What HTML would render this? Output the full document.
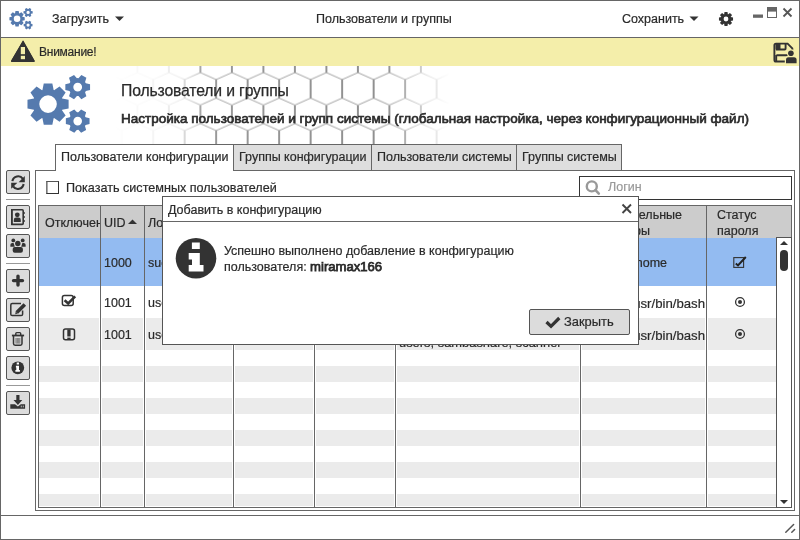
<!DOCTYPE html>
<html><head><meta charset="utf-8">
<style>
*{margin:0;padding:0;box-sizing:border-box}
html,body{width:800px;height:540px;overflow:hidden;background:#fff}
body{position:relative;font-family:"Liberation Sans",sans-serif;font-size:12.5px;color:#2a2a2a}
.a{position:absolute}
.t{position:absolute;white-space:nowrap;line-height:15px;-webkit-text-stroke-width:0.2px;will-change:transform}
.hl{position:absolute;background:#666}
.btn{position:absolute;left:6px;width:24px;height:24px;border:1px solid #555;border-radius:2px;background:#dcdcdc}
.btn svg{position:absolute;left:0;top:0}
.sep{position:absolute;left:6px;width:24px;height:1px;background:#999}
.row{position:absolute;left:39px;width:737px}
.vl{position:absolute;width:1px;background:#666}
</style></head><body>

<!-- window border -->
<div class="a" style="left:0;top:0;width:800px;height:540px;border:1px solid #666"></div>

<!-- title bar -->
<div class="hl" style="left:0;top:37px;width:800px;height:1px"></div>
<svg class="a" style="left:8px;top:6px" width="26" height="26" viewBox="0 0 26 26"></svg>
<div class="t" style="left:52px;top:12px">Загрузить</div>
<div class="t" style="left:316px;top:12px">Пользователи и группы</div>
<div class="t" style="left:622px;top:12px">Сохранить</div>

<!-- warning bar -->
<div class="a" style="left:1px;top:38px;width:798px;height:28px;background:#f4eeaa"></div>
<div class="t" style="left:39px;top:45px;font-size:12px;letter-spacing:-0.25px">Внимание!</div>


<!-- hex pattern -->
<svg class="a" style="left:0;top:0" width="800" height="170" viewBox="0 0 800 170">
<defs>
<pattern id="hx" patternUnits="userSpaceOnUse" x="11.40" y="21.60" width="31.5" height="51">
<path d="M0 0 L15.75 7 L31.5 0 M0 32.5 L15.75 25.5 L31.5 32.5" fill="none" stroke="#222" stroke-width="0.8"/><path d="M15.75 7 V25.5 M0 32.5 V51 M31.5 32.5 V51" fill="none" stroke="#333" stroke-width="1" shape-rendering="crispEdges"/>
</pattern>
<linearGradient id="hg" gradientUnits="userSpaceOnUse" x1="110" x2="460" y1="0" y2="0"><stop offset="0.000" stop-color="#fff" stop-opacity="0"/><stop offset="0.114" stop-color="#fff" stop-opacity="0.04"/><stop offset="0.200" stop-color="#fff" stop-opacity="0.12"/><stop offset="0.271" stop-color="#fff" stop-opacity="0.5"/><stop offset="0.786" stop-color="#fff" stop-opacity="0.55"/><stop offset="0.857" stop-color="#fff" stop-opacity="0.35"/><stop offset="0.920" stop-color="#fff" stop-opacity="0.15"/><stop offset="0.971" stop-color="#fff" stop-opacity="0"/></linearGradient>
<mask id="hm" maskUnits="userSpaceOnUse" x="110" y="66" width="350" height="78"><rect x="110" y="66" width="350" height="78" fill="url(#hg)"/></mask>
</defs>
<rect x="110" y="66" width="350" height="78" fill="url(#hx)" mask="url(#hm)"/>
</svg>

<!-- heading -->
<div class="t" style="left:121px;top:82px;font-size:15.75px;line-height:18px;letter-spacing:-0.15px;-webkit-text-stroke-width:0.25px">Пользователи и группы</div>
<div class="t" style="left:121px;top:111px;font-size:13.5px;-webkit-text-stroke-width:0.65px">Настройка пользователей и групп системы (глобальная настройка, через конфигурационный файл)</div>

<!-- left toolbar -->
<div class="btn" style="top:170px"></div>
<div class="sep" style="top:199px"></div>
<div class="btn" style="top:205px"></div>
<div class="btn" style="top:234px"></div>
<div class="sep" style="top:263px"></div>
<div class="btn" style="top:269px"></div>
<div class="btn" style="top:298px"></div>
<div class="btn" style="top:327px"></div>
<div class="btn" style="top:356px"></div>
<div class="sep" style="top:385px"></div>
<div class="btn" style="top:391px"></div>

<!-- tabs -->
<div class="a" style="left:35px;top:170px;width:760px;height:341px;border:1px solid #666"></div>
<div class="a" style="left:55px;top:144px;width:179px;height:27px;border:1px solid #666;border-bottom:none;background:#fff"></div>
<div class="a" style="left:233px;top:144px;width:139px;height:27px;border:1px solid #666;background:#dedede"></div>
<div class="a" style="left:371px;top:144px;width:146px;height:27px;border:1px solid #666;background:#dedede"></div>
<div class="a" style="left:516px;top:144px;width:106px;height:27px;border:1px solid #666;background:#dedede"></div>
<div class="t" style="left:61px;top:150px">Пользователи конфигурации</div>
<div class="t" style="left:239px;top:150px">Группы конфигурации</div>
<div class="t" style="left:377px;top:150px">Пользователи системы</div>
<div class="t" style="left:522px;top:150px">Группы системы</div>

<!-- checkbox -->
<div class="a" style="left:46px;top:181px;width:13px;height:13px;border:1px solid;border-color:#555 #333 #333 #777;box-shadow:inset 1px 0 #aaa;background:#fff"></div>
<div class="t" style="left:66px;top:181px;font-size:12.6px">Показать системных пользователей</div>

<!-- search -->
<div class="a" style="left:579px;top:176px;width:213px;height:24px;border:1px solid #333;background:#fff"></div>
<div class="t" style="left:608px;top:180px;color:#999">Логин</div>

<svg class="a" style="left:580px;top:177px" width="24" height="20" viewBox="580 177 24 20"><circle cx="591.8" cy="186.4" r="5" fill="none" stroke="#999" stroke-width="2.4"/><path d="M595.5 190.2 L598.8 193.6" stroke="#999" stroke-width="2.6" stroke-linecap="round"/></svg>
<!-- table -->
<div class="a" style="left:38px;top:205px;width:754px;height:303px;border:1px solid #666;background:#fff"></div>
<div class="a" style="left:39px;top:206px;width:752px;height:32px;background:#cccccc"></div>

<div class="a" style="left:39px;top:238px;width:737px;height:48px;background:#93bbf1"></div>
<div class="a" style="left:39px;top:318px;width:737px;height:32px;background:#ebebeb"></div>
<div class="a" style="left:39px;top:366px;width:737px;height:16px;background:#ebebeb"></div>
<div class="a" style="left:39px;top:398px;width:737px;height:16px;background:#ebebeb"></div>
<div class="a" style="left:39px;top:430px;width:737px;height:16px;background:#ebebeb"></div>
<div class="a" style="left:39px;top:462px;width:737px;height:16px;background:#ebebeb"></div>
<div class="a" style="left:39px;top:494px;width:737px;height:12px;background:#ebebeb"></div>
<div class="a" style="left:99px;top:286px;width:3px;height:221px;background:#fff"></div>
<div class="vl" style="left:100px;top:206px;height:301px"></div>
<div class="a" style="left:143px;top:286px;width:3px;height:221px;background:#fff"></div>
<div class="vl" style="left:144px;top:206px;height:301px"></div>
<div class="a" style="left:232px;top:286px;width:3px;height:221px;background:#fff"></div>
<div class="vl" style="left:233px;top:206px;height:301px"></div>
<div class="a" style="left:313px;top:286px;width:3px;height:221px;background:#fff"></div>
<div class="vl" style="left:314px;top:206px;height:301px"></div>
<div class="a" style="left:394px;top:286px;width:3px;height:221px;background:#fff"></div>
<div class="vl" style="left:395px;top:206px;height:301px"></div>
<div class="a" style="left:579px;top:286px;width:3px;height:221px;background:#fff"></div>
<div class="vl" style="left:580px;top:206px;height:301px"></div>
<div class="a" style="left:705px;top:286px;width:3px;height:221px;background:#fff"></div>
<div class="vl" style="left:706px;top:206px;height:301px"></div>
<!-- scrollbar -->
<div class="a" style="left:776px;top:237px;width:16px;height:271px;border:1px solid #555;background:#fff"></div>
<svg class="a" style="left:776px;top:237px" width="16" height="271" viewBox="0 0 16 271">
<path d="M4 8 L8 4 L12 8 Z" fill="#333"/>
<rect x="4" y="13" width="8" height="21" rx="4" fill="#333"/>
<path d="M4 263 L12 263 L8 267 Z" fill="#333"/>
</svg>

<!-- header text -->
<div class="t" style="left:45px;top:216px;width:55px;overflow:hidden">Отключен</div>
<div class="t" style="left:104px;top:216px">UID</div>
<svg class="a" style="left:128px;top:219px" width="10" height="6"><path d="M0 5 L4.5 0.5 L9 5 Z" fill="#333"/></svg>
<div class="t" style="left:148px;top:216px">Логин</div>
<div class="t" style="left:717px;top:208px">Статус</div>
<div class="t" style="left:717px;top:224px">пароля</div>
<div class="t" style="left:540px;top:208px;width:142px;overflow:hidden;text-align:right">Дополнительные</div>
<div class="t" style="left:560px;top:224px;width:90px;overflow:hidden;text-align:right">параметры</div>

<!-- cells -->
<div class="t" style="left:104px;top:256px">1000</div>
<div class="t" style="left:148px;top:256px">sudo</div>
<div class="t" style="left:104px;top:296px">1001</div>
<div class="t" style="left:148px;top:296px">user</div>
<div class="t" style="left:104px;top:328px">1001</div>
<div class="t" style="left:148px;top:328px">user</div>
<div class="t" style="left:600px;top:256px;width:67px;overflow:hidden;text-align:right">/home</div>
<div class="t" style="left:584px;top:296px;width:121px;overflow:hidden;text-align:right;font-size:13.2px">/usr/bin/bash</div>
<div class="t" style="left:584px;top:328px;width:121px;overflow:hidden;text-align:right;font-size:13.2px">/usr/bin/bash</div>
<div class="t" style="left:399px;top:335px;font-size:12.9px">users, sambashare, scanner</div>


<!-- toolbar icons -->
<svg class="a" style="left:0;top:160px" width="36" height="260" viewBox="0 160 36 260">
<g fill="none" stroke="#333" stroke-width="2.1">
<path d="M12.4 181.2 A5.8 5.8 0 0 1 22.9 178.8"/>
<path d="M23.6 184 A5.8 5.8 0 0 1 13.1 186.4"/>
</g>
<path d="M24.8 176 L24.8 182.2 L18.6 182.2 Z" fill="#333"/>
<path d="M11.2 188.8 L11.2 182.8 L17.4 182.8 Z" fill="#333"/>
<rect x="11.8" y="209.8" width="11.4" height="14.6" rx="1" fill="none" stroke="#333" stroke-width="1.6"/>
<rect x="11" y="209" width="1.6" height="16.2" fill="#333"/>
<path d="M23.2 212 h1.5 v2 h-1.5z M23.2 216 h1.5 v2 h-1.5z M23.2 220 h1.5 v2 h-1.5z" fill="#333"/>
<circle cx="17.3" cy="214.8" r="2.4" fill="#333"/>
<path d="M13.8 222 L13.8 220 Q13.8 217.6 16.2 217.6 L18.4 217.6 Q20.8 217.6 20.8 220 L20.8 222 Z" fill="#333"/>
<circle cx="17.8" cy="243.5" r="2.7" fill="#333"/>
<rect x="12.7" y="247" width="10.2" height="5.8" rx="2" fill="#333"/>
<circle cx="13.3" cy="240.4" r="1.9" fill="#333"/><circle cx="22.7" cy="240.4" r="1.9" fill="#333"/>
<path d="M10.4 246.7 L10.4 244.8 Q10.4 242.9 12.3 242.9 L13.6 242.9 L14.8 246.7 Z" fill="#333"/>
<path d="M25.6 246.7 L25.6 244.8 Q25.6 242.9 23.7 242.9 L22.4 242.9 L21.2 246.7 Z" fill="#333"/>
<path d="M13.5 280.6 L22.5 280.6 M18 276.1 L18 285.1" stroke="#333" stroke-width="3.4" stroke-linecap="round"/>
<path d="M21 303.6 L12.2 303.6 Q10.8 303.6 10.8 305 L10.8 314.2 Q10.8 315.6 12.2 315.6 L21.2 315.6 Q22.6 315.6 22.6 314.2 L22.6 310.5" fill="none" stroke="#333" stroke-width="1.5"/>
<path d="M24.8 304.5 L16.8 312.5" stroke="#333" stroke-width="3.6" stroke-linecap="butt"/>
<path d="M15.8 311.5 L17.8 313.5 L15.2 314.2 Z" fill="#333"/>
<path d="M11.9 335.5 L24.1 335.5" stroke="#333" stroke-width="1.8"/>
<path d="M15.8 335 L15.8 333.5 Q15.8 332.6 16.7 332.6 L19.8 332.6 Q20.7 332.6 20.7 333.5 L20.7 335" fill="none" stroke="#333" stroke-width="1.4"/>
<path d="M13.5 336 L13.5 343.6 Q13.5 345.2 15.1 345.2 L20.4 345.2 Q22 345.2 22 343.6 L22 336" fill="none" stroke="#333" stroke-width="1.5"/>
<rect x="15.5" y="338" width="4.8" height="5.5" fill="#777"/>
<path d="M16.5 338 L16.5 343.5 M18 338 L18 343.5 M19.3 338 L19.3 343.5" stroke="#bbb" stroke-width="0.5"/>
<circle cx="17.8" cy="367.8" r="6.4" fill="#333"/>
<path d="M16.7 362.6 h2.3 v1.9 h-2.3 z M15.9 365.8 h3.1 v4.3 h0.9 v1.6 h-4.5 v-1.6 h0.9 v-2.7 h-0.4 z" fill="#fff"/>
<path d="M16.3 395 L19.5 395 L19.5 400 L22.3 400 L17.9 405 L13.5 400 L16.3 400 Z" fill="#333"/>
<path d="M10.3 404.2 L15 404.2 L17.9 406.6 L20.8 404.2 L25.1 404.2 L25.1 408.8 L10.3 408.8 Z" fill="#333"/>
<rect x="20.8" y="405.6" width="0.9" height="1.8" fill="#ccc"/><rect x="22.8" y="405.6" width="0.9" height="1.8" fill="#ccc"/>
</svg>

<!-- table icons -->
<svg class="a" style="left:50px;top:240px" width="720" height="110" viewBox="50 240 720 110">
<rect x="62.4" y="295.6" width="10.8" height="10" rx="2" fill="none" stroke="#333" stroke-width="1.5"/>
<path d="M64.6 300.2 L68.2 303.4 L75.2 296.4" fill="none" stroke="#333" stroke-width="2.6"/>
<rect x="63.5" y="328.9" width="11" height="10.8" rx="2" fill="none" stroke="#333" stroke-width="1.5"/>
<rect x="67.3" y="329.5" width="3.3" height="7" fill="#333"/>
<rect x="67.3" y="337.6" width="3.3" height="2" fill="#333"/>
<rect x="733.8" y="257.6" width="9.8" height="9.8" fill="none" stroke="#333" stroke-width="1.1"/>
<path d="M735.8 263.6 L738 265.4 L745.8 257" fill="none" stroke="#222" stroke-width="2"/>
<circle cx="740" cy="302" r="4.4" fill="none" stroke="#333" stroke-width="1.3"/>
<circle cx="740" cy="302" r="2" fill="#333"/>
<circle cx="740" cy="334" r="4.4" fill="none" stroke="#333" stroke-width="1.3"/>
<circle cx="740" cy="334" r="2" fill="#333"/>
</svg>

<!-- statusbar -->
<div class="hl" style="left:0;top:515px;width:800px;height:1px"></div>

<svg class="a" style="left:780px;top:520px" width="19" height="19" viewBox="780 520 19 19"><path d="M785.8 532.3 L793.6 524.5 M791.8 532.3 L794.6 529.5" stroke="#555" stroke-width="1.5" stroke-linecap="round"/></svg>
<!-- dialog -->
<div class="a" style="left:162px;top:196px;width:477px;height:149px;border:1px solid #555;background:#fff;box-shadow:none"></div>
<div class="hl" style="left:163px;top:221px;width:475px;height:1px"></div>
<div class="t" style="left:168px;top:203px">Добавить в конфигурацию</div>
<div class="t" style="left:224px;top:244px">Успешно выполнено добавление в конфигурацию</div>
<div class="t" style="left:224px;top:259px">пользователя: <span style="font-size:13.1px;-webkit-text-stroke-width:0.75px">miramax166</span></div>
<div class="a" style="left:529px;top:309px;width:101px;height:26px;border:1px solid #555;border-radius:2px;background:#dcdcdc"></div>
<div class="t" style="left:564px;top:314px;font-size:12.9px">Закрыть</div>


<!-- ICONS -->
<svg class="a" style="left:0;top:0" width="40" height="38" viewBox="0 0 40 38"><g transform="translate(-0.80 -19.93) scale(0.3717)" fill="#557aae"><path fill-rule="evenodd" d="M62.18 98.50 L68.61 99.80 L68.61 108.40 L62.18 109.70 A15.2 15.2 0 0 1 62.00 110.13 L65.63 115.59 L59.54 121.68 L54.08 118.05 A15.2 15.2 0 0 1 53.65 118.23 L52.35 124.66 L43.75 124.66 L42.45 118.23 A15.2 15.2 0 0 1 42.02 118.05 L36.56 121.68 L30.47 115.59 L34.10 110.13 A15.2 15.2 0 0 1 33.92 109.70 L27.49 108.40 L27.49 99.80 L33.92 98.50 A15.2 15.2 0 0 1 34.10 98.07 L30.47 92.61 L36.56 86.52 L42.02 90.15 A15.2 15.2 0 0 1 42.45 89.97 L43.75 83.54 L52.35 83.54 L53.65 89.97 A15.2 15.2 0 0 1 54.08 90.15 L59.54 86.52 L65.63 92.61 L62.00 98.07 A15.2 15.2 0 0 1 62.18 98.50 Z M56.85 104.10 A8.8 8.8 0 1 0 39.25 104.10 A8.8 8.8 0 1 0 56.85 104.10 Z M85.86 83.30 L90.06 84.20 L90.06 90.00 L85.86 90.90 A9.0 9.0 0 0 1 85.07 92.27 L86.39 96.36 L81.37 99.26 L78.49 96.07 A9.0 9.0 0 0 1 76.91 96.07 L74.03 99.26 L69.01 96.36 L70.33 92.27 A9.0 9.0 0 0 1 69.54 90.90 L65.34 90.00 L65.34 84.20 L69.54 83.30 A9.0 9.0 0 0 1 70.33 81.93 L69.01 77.84 L74.03 74.94 L76.91 78.13 A9.0 9.0 0 0 1 78.49 78.13 L81.37 74.94 L86.39 77.84 L85.07 81.93 A9.0 9.0 0 0 1 85.86 83.30 Z M82.10 87.10 A4.4 4.4 0 1 0 73.30 87.10 A4.4 4.4 0 1 0 82.10 87.10 Z M85.64 117.30 L89.55 118.20 L89.55 124.00 L85.64 124.90 A8.8 8.8 0 0 1 84.96 126.07 L86.14 129.91 L81.11 132.81 L78.38 129.87 A8.8 8.8 0 0 1 77.02 129.87 L74.29 132.81 L69.26 129.91 L70.44 126.07 A8.8 8.8 0 0 1 69.76 124.90 L65.85 124.00 L65.85 118.20 L69.76 117.30 A8.8 8.8 0 0 1 70.44 116.13 L69.26 112.29 L74.29 109.39 L77.02 112.33 A8.8 8.8 0 0 1 78.38 112.33 L81.11 109.39 L86.14 112.29 L84.96 116.13 A8.8 8.8 0 0 1 85.64 117.30 Z M82.00 121.10 A4.3 4.3 0 1 0 73.40 121.10 A4.3 4.3 0 1 0 82.00 121.10 Z"/></g></svg>
<svg class="a" style="left:20px;top:68px" width="80" height="70" viewBox="20 68 80 70"><path fill="#557aae" fill-rule="evenodd" d="M62.18 98.50 L68.61 99.80 L68.61 108.40 L62.18 109.70 A15.2 15.2 0 0 1 62.00 110.13 L65.63 115.59 L59.54 121.68 L54.08 118.05 A15.2 15.2 0 0 1 53.65 118.23 L52.35 124.66 L43.75 124.66 L42.45 118.23 A15.2 15.2 0 0 1 42.02 118.05 L36.56 121.68 L30.47 115.59 L34.10 110.13 A15.2 15.2 0 0 1 33.92 109.70 L27.49 108.40 L27.49 99.80 L33.92 98.50 A15.2 15.2 0 0 1 34.10 98.07 L30.47 92.61 L36.56 86.52 L42.02 90.15 A15.2 15.2 0 0 1 42.45 89.97 L43.75 83.54 L52.35 83.54 L53.65 89.97 A15.2 15.2 0 0 1 54.08 90.15 L59.54 86.52 L65.63 92.61 L62.00 98.07 A15.2 15.2 0 0 1 62.18 98.50 Z M56.85 104.10 A8.8 8.8 0 1 0 39.25 104.10 A8.8 8.8 0 1 0 56.85 104.10 Z M85.86 83.30 L90.06 84.20 L90.06 90.00 L85.86 90.90 A9.0 9.0 0 0 1 85.07 92.27 L86.39 96.36 L81.37 99.26 L78.49 96.07 A9.0 9.0 0 0 1 76.91 96.07 L74.03 99.26 L69.01 96.36 L70.33 92.27 A9.0 9.0 0 0 1 69.54 90.90 L65.34 90.00 L65.34 84.20 L69.54 83.30 A9.0 9.0 0 0 1 70.33 81.93 L69.01 77.84 L74.03 74.94 L76.91 78.13 A9.0 9.0 0 0 1 78.49 78.13 L81.37 74.94 L86.39 77.84 L85.07 81.93 A9.0 9.0 0 0 1 85.86 83.30 Z M82.10 87.10 A4.4 4.4 0 1 0 73.30 87.10 A4.4 4.4 0 1 0 82.10 87.10 Z M85.64 117.30 L89.55 118.20 L89.55 124.00 L85.64 124.90 A8.8 8.8 0 0 1 84.96 126.07 L86.14 129.91 L81.11 132.81 L78.38 129.87 A8.8 8.8 0 0 1 77.02 129.87 L74.29 132.81 L69.26 129.91 L70.44 126.07 A8.8 8.8 0 0 1 69.76 124.90 L65.85 124.00 L65.85 118.20 L69.76 117.30 A8.8 8.8 0 0 1 70.44 116.13 L69.26 112.29 L74.29 109.39 L77.02 112.33 A8.8 8.8 0 0 1 78.38 112.33 L81.11 109.39 L86.14 112.29 L84.96 116.13 A8.8 8.8 0 0 1 85.64 117.30 Z M82.00 121.10 A4.3 4.3 0 1 0 73.40 121.10 A4.3 4.3 0 1 0 82.00 121.10 Z"/></svg>
<svg class="a" style="left:0;top:0" width="800" height="70" viewBox="0 0 800 70">
<path d="M115 16.5 L124 16.5 L119.5 21 Z" fill="#333"/>
<path d="M689.5 16.5 L698.5 16.5 L694 21 Z" fill="#333"/>
<path fill="#333" fill-rule="evenodd" d="M730.62 17.10 L733.04 17.50 L733.04 20.50 L730.62 20.90 A5.0 5.0 0 0 1 730.61 20.93 L732.04 22.92 L729.92 25.04 L727.93 23.61 A5.0 5.0 0 0 1 727.90 23.62 L727.50 26.04 L724.50 26.04 L724.10 23.62 A5.0 5.0 0 0 1 724.07 23.61 L722.08 25.04 L719.96 22.92 L721.39 20.93 A5.0 5.0 0 0 1 721.38 20.90 L718.96 20.50 L718.96 17.50 L721.38 17.10 A5.0 5.0 0 0 1 721.39 17.07 L719.96 15.08 L722.08 12.96 L724.07 14.39 A5.0 5.0 0 0 1 724.10 14.38 L724.50 11.96 L727.50 11.96 L727.90 14.38 A5.0 5.0 0 0 1 727.93 14.39 L729.92 12.96 L732.04 15.08 L730.61 17.07 A5.0 5.0 0 0 1 730.62 17.10 Z M728.40 19.00 A2.4 2.4 0 1 0 723.60 19.00 A2.4 2.4 0 1 0 728.40 19.00 Z"/>
<rect x="753" y="14.5" width="10" height="3.3" fill="#666"/>
<rect x="767.5" y="7.5" width="9" height="10" fill="#fff" stroke="#666" stroke-width="1"/>
<rect x="767" y="7" width="10" height="4.6" fill="#666"/>
<path d="M783.5 8.5 L791.5 16.5 M791.5 8.5 L783.5 16.5" stroke="#555" stroke-width="1.8"/>
<path d="M22.8 41 Q23 40.2 23.6 41 L34.5 60.5 Q35 62 33.5 62 L12 62 Q10.5 62 11.2 60.5 Z" fill="#333"/>
<path d="M22.9 40.5 L34.6 60.8 Q35 62 33.6 62 L12.2 62 Q10.8 62 11.2 60.8 Z" fill="#333"/>
<rect x="20.8" y="47" width="4.2" height="7.2" fill="#f4eeaa"/>
<rect x="20.8" y="55.8" width="4.2" height="3.4" fill="#f4eeaa"/>
<g fill="none" stroke="#333" stroke-width="1.9">
<path d="M776 43.6 L787.6 43.6 L792.3 48.3 L792.3 59.8 Q792.3 61.5 790.6 61.5 L776 61.5 Q774.4 61.5 774.4 59.9 L774.4 45.2 Q774.4 43.6 776 43.6 Z"/>
<path d="M776.4 55.2 L788 55.2 M776.2 55 L776.2 61.5"/>
<path d="M785.6 43.8 L785.6 48.6 Q785.6 49.5 784.7 49.5 L776 49.5"/>
</g>
<rect x="775.5" y="43" width="5" height="6.5" fill="#333"/>
<circle cx="790.9" cy="53.2" r="3.9" fill="#f4eeaa"/>
<path d="M784.8 64 L784.8 59.5 Q784.8 56 788.3 56 L793.6 56 Q797.5 56 797.5 59.5 L797.5 64 Z" fill="#f4eeaa"/>
<circle cx="790.9" cy="53.2" r="2.8" fill="#333"/>
<path d="M786 63.3 L786 59.8 Q786 57.2 788.6 57.2 L794 57.2 Q796.6 57.2 796.6 59.8 L796.6 63.3 Z" fill="#333"/>
</svg>


<!-- dialog icons -->
<svg class="a" style="left:160px;top:196px" width="480" height="150" viewBox="160 196 480 150">
<circle cx="196" cy="258.2" r="20.3" fill="#333"/>
<path d="M191.9 242.4 h7.9 v6.5 h-7.9 z M188.7 253 h11.1 v12 h3.7 v6.5 h-14.8 v-6.5 h3.3 v-5.5 h-3.3 z" fill="#fff"/>
<path d="M622.5 204.5 L631 213 M631 204.5 L622.5 213" stroke="#444" stroke-width="1.9"/>
<path d="M546.5 322 L551 326.3 L559.3 318" fill="none" stroke="#333" stroke-width="3.2"/>
</svg>

</body></html>
